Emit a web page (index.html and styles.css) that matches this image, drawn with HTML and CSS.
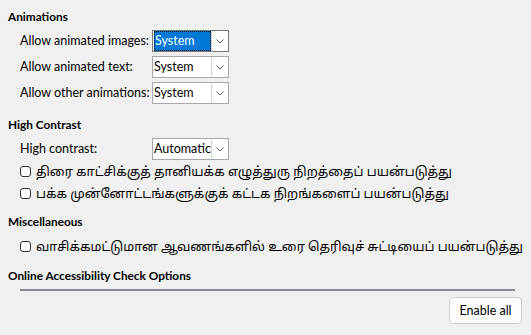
FILE: index.html
```html
<!DOCTYPE html>
<html lang="ta">
<head>
<meta charset="utf-8">
<title>Accessibility options</title>
<link rel="stylesheet" href="styles.css">
</head>
<body>
<div class="page">
  <section class="section section-animations">
    <h2 class="section-title">Animations</h2>
    <div class="form-grid">
      <label class="field-label">Allow animated images:</label>
      <div class="combo combo-focused">
        <span class="combo-value"><span class="combo-selected">System</span></span>
        <span class="combo-button"><svg class="chevron" viewBox="0 0 8 5" width="8" height="5"><path d="M0.5 0.5 L4 4 L7.5 0.5" fill="none" stroke="#5f5f5f" stroke-width="1"/></svg></span>
      </div>
      <label class="field-label">Allow animated text:</label>
      <div class="combo">
        <span class="combo-value">System</span>
        <span class="combo-button"><svg class="chevron" viewBox="0 0 8 5" width="8" height="5"><path d="M0.5 0.5 L4 4 L7.5 0.5" fill="none" stroke="#5f5f5f" stroke-width="1"/></svg></span>
      </div>
      <label class="field-label">Allow other animations:</label>
      <div class="combo">
        <span class="combo-value">System</span>
        <span class="combo-button"><svg class="chevron" viewBox="0 0 8 5" width="8" height="5"><path d="M0.5 0.5 L4 4 L7.5 0.5" fill="none" stroke="#5f5f5f" stroke-width="1"/></svg></span>
      </div>
    </div>
  </section>

  <section class="section section-contrast">
    <h2 class="section-title">High Contrast</h2>
    <div class="form-grid">
      <label class="field-label">High contrast:</label>
      <div class="combo">
        <span class="combo-value">Automatic</span>
        <span class="combo-button"><svg class="chevron" viewBox="0 0 8 5" width="8" height="5"><path d="M0.5 0.5 L4 4 L7.5 0.5" fill="none" stroke="#5f5f5f" stroke-width="1"/></svg></span>
      </div>
    </div>
    <label class="check-row"><span class="checkbox"></span><span class="check-text">திரை காட்சிக்குத் தானியக்க எழுத்துரு நிறத்தைப் பயன்படுத்து</span></label>
    <label class="check-row"><span class="checkbox"></span><span class="check-text">பக்க முன்னோட்டங்களுக்குக் கட்டக நிறங்களைப் பயன்படுத்து</span></label>
  </section>

  <section class="section section-misc">
    <h2 class="section-title">Miscellaneous</h2>
    <label class="check-row"><span class="checkbox"></span><span class="check-text">வாசிக்கமட்டுமான ஆவணங்களில் உரை தெரிவுச் சுட்டியைப் பயன்படுத்து</span></label>
  </section>

  <section class="section section-online">
    <h2 class="section-title">Online Accessibility Check Options</h2>
    <div class="separator"></div>
    <div class="actions">
      <button class="btn" type="button">Enable all</button>
    </div>
  </section>
</div>
</body>
</html>
```

FILE: styles.css
```css
html, body {
  margin: 0;
  padding: 0;
  background: #f0f0f0;
}

body {
  font-family: "Segoe UI", Lato, "Noto Sans Tamil", "Lohit Tamil", sans-serif;
  font-size: 12.5px;
  color: #000;
  width: 531px;
  height: 335px;
  overflow: hidden;
  white-space: nowrap;
}

.page {
  padding: 9px 9px 0 8px;
}

.section-title {
  margin: 0;
  font-size: 11.8px;
  font-weight: 700;
  line-height: 16px;
}

.section-contrast { margin-top: 13px; }
.section-misc { margin-top: 10px; }
.section-online { margin-top: 11px; }

.form-grid {
  display: grid;
  grid-template-columns: 132px 77px;
  row-gap: 4px;
  padding-left: 12px;
  margin-top: 5px;
  align-items: center;
}

.field-label {
  line-height: 16px;
}

.combo {
  display: flex;
  height: 22px;
  box-sizing: border-box;
  border: 1px solid #a8a8a8;
  background: #fff;
}

.combo-focused {
  border-color: #7a7a7a;
}

.combo-value {
  flex: 1;
  display: flex;
  align-items: center;
  padding-left: 1px;
  line-height: 18px;
}

.combo-selected {
  display: block;
  flex: 1;
  height: 20px;
  box-sizing: border-box;
  background: #0078d7;
  color: #fff;
  outline: 1px dotted #000;
  outline-offset: -1px;
  padding-left: 1px;
  line-height: 19px;
}

.combo-button {
  width: 16px;
  display: flex;
  align-items: center;
  justify-content: center;
  border-left: 1px solid #d4d4d4;
}

.check-row {
  display: flex;
  align-items: center;
  height: 22px;
  padding-left: 12px;
}

.section-misc .check-row {
  margin-top: 5px;
}

.checkbox {
  width: 11px;
  height: 11px;
  box-sizing: border-box;
  border: 1px solid #333;
  border-radius: 3px;
  background: #fff;
  margin-right: 5px;
  flex: none;
}

.check-text {
  font-size: 12.75px;
  line-height: 16px;
}

.separator {
  margin: 5px 7px 0 12px;
  height: 2px;
  background: #868a91;
}

.actions {
  display: flex;
  justify-content: flex-end;
  margin-top: 6px;
}

.btn {
  font: inherit;
  color: #000;
  width: 73px;
  height: 27px;
  background: #fdfdfd;
  border: 1px solid #d0d0d0;
  border-radius: 4px;
  padding: 0;
}
```
